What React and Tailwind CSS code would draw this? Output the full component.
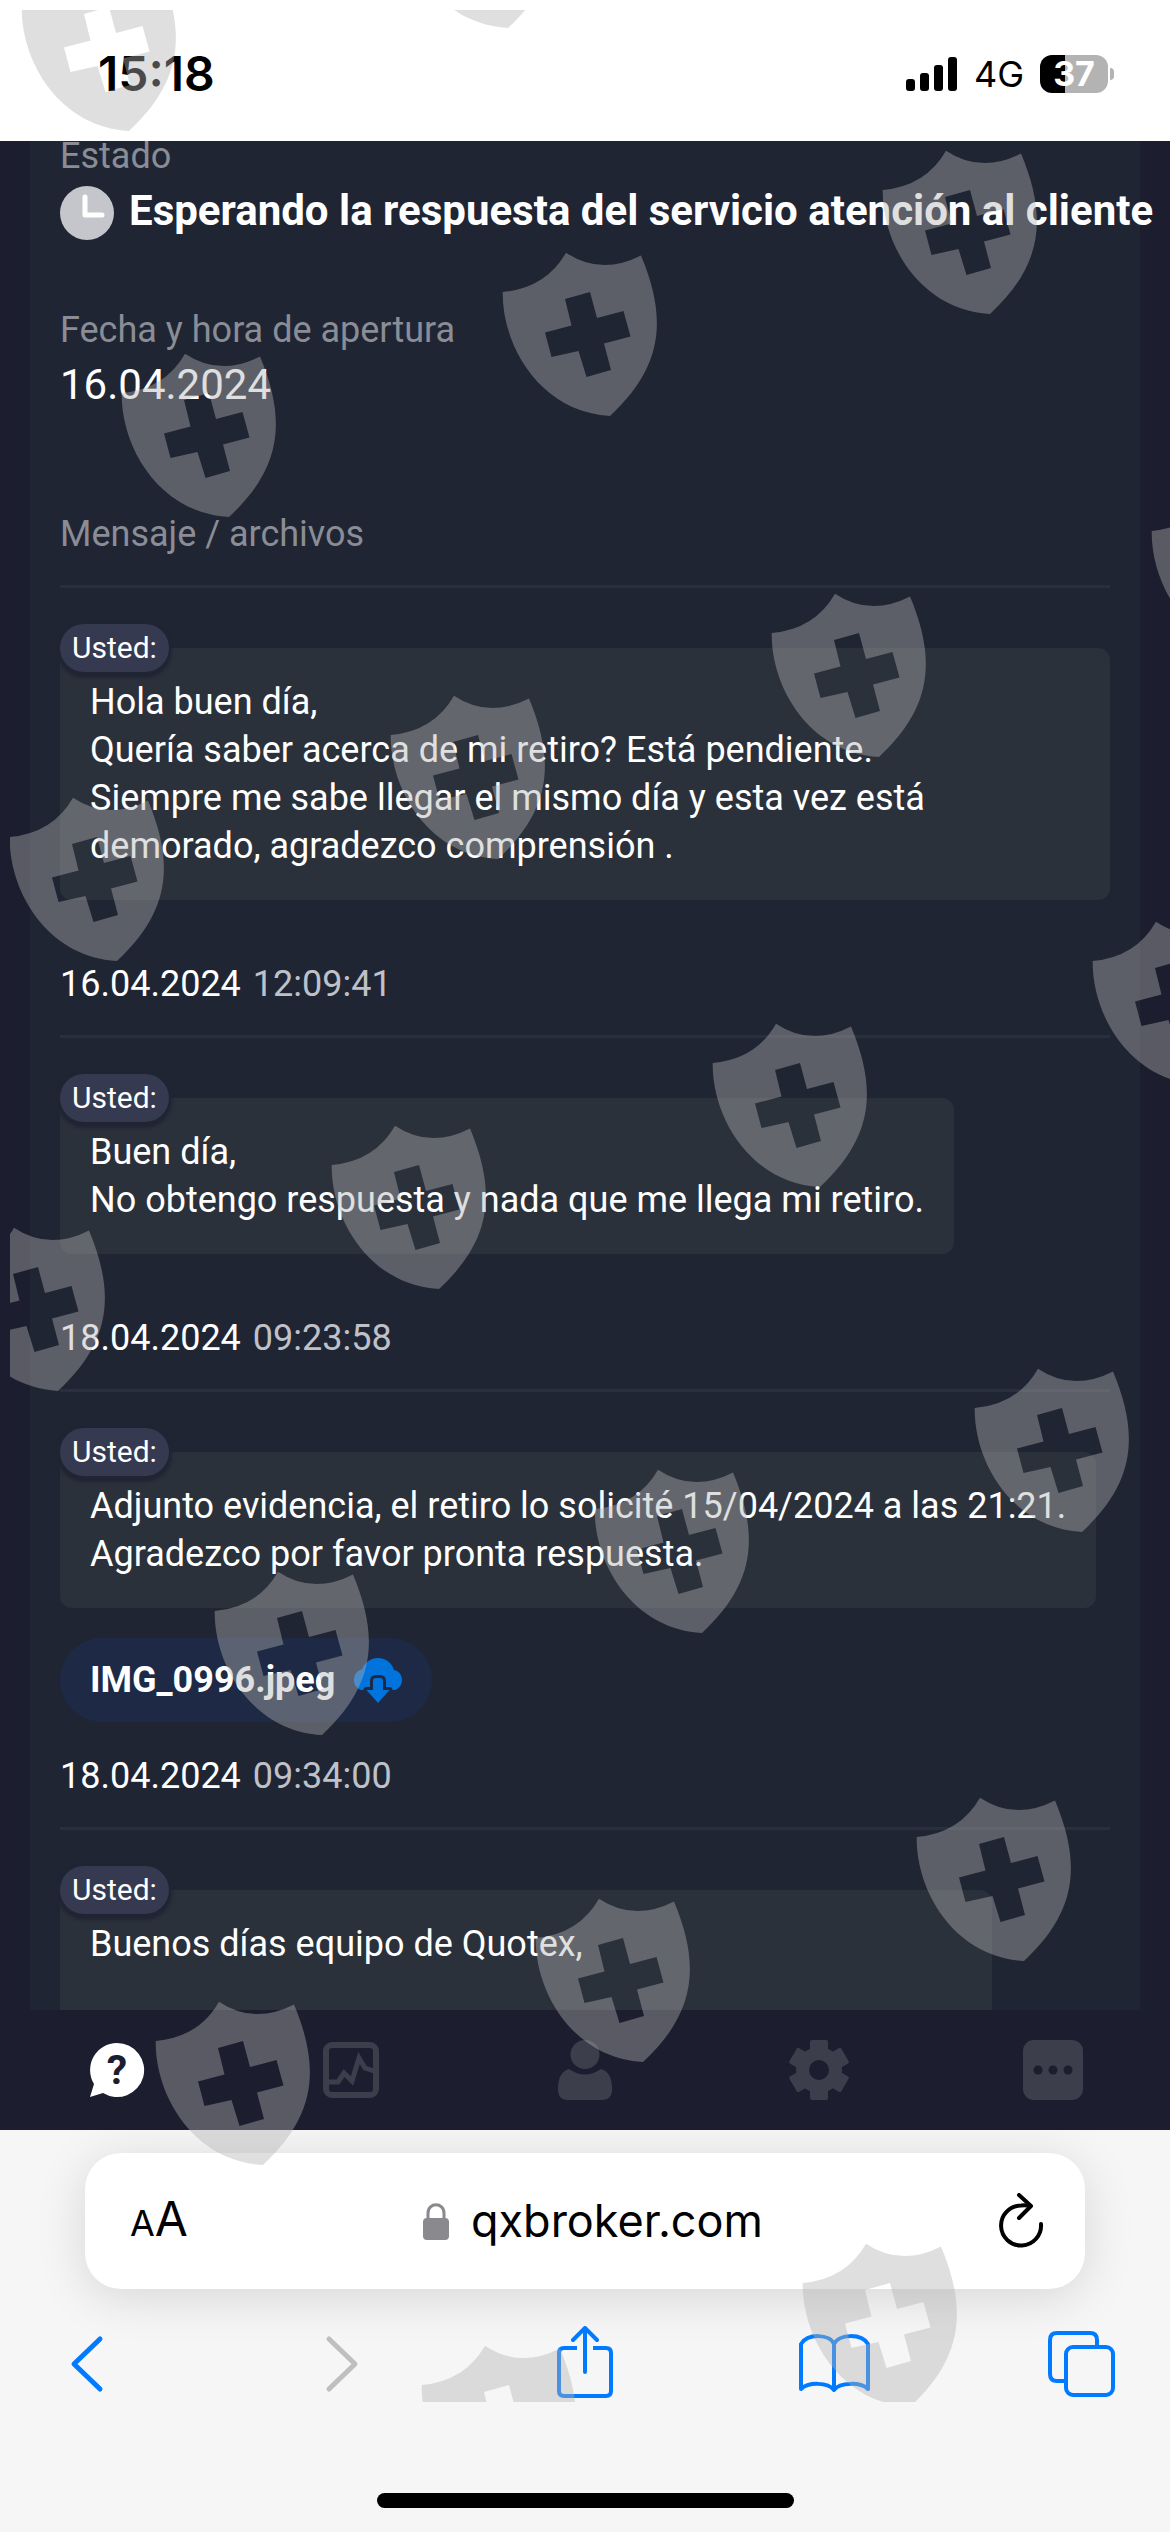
import React from "react";

const messages = [
    {
        id: 1,
        text: "Hola buen día,\nQuería saber acerca de mi retiro? Está pendiente.\nSiempre me sabe llegar el mismo día y esta vez está demorado, agradezco comprensión .",
        date: "16.04.2024",
        time: "12:09:41",
    },
    {
        id: 2,
        text: "Buen día,\nNo obtengo respuesta y nada que me llega mi retiro.",
        date: "18.04.2024",
        time: "09:23:58",
    },
    {
        id: 3,
        text: "Adjunto evidencia, el retiro lo solicité 15/04/2024 a las 21:21.\nAgradezco por favor pronta respuesta.",
        date: "18.04.2024",
        time: "09:34:00",
        file: "IMG_0996.jpeg",
    },
    {
        id: 4,
        text: "Buenos días equipo de Quotex,\n\n",
        wide: true,
    },
];

// top-left corner of every watermark shield
const shields = [
    [-1, -55], [378, -158],
    [860, 128], [480, 230], [99, 331],
    [1129, 469], [749, 571], [368, 673], [-13, 775],
    [1070, 899], [690, 1001], [309, 1103], [-72, 1205],
    [952, 1346], [572, 1447], [192, 1549],
    [894, 1775], [513, 1876], [133, 1979],
    [780, 2221], [399, 2323],
];

const Watermark = () => (
    <div className="absolute left-[10px] right-0 top-[10px] bottom-[130px] overflow-hidden pointer-events-none">
        <svg className="w-full h-full" fill="#b2b2b2" fillOpacity="0.416" aria-hidden="true">
            <g transform="translate(-10 -10)">
                {shields.map(([x, y]) => (
                    <path
                        key={`${x}-${y}`}
                        transform={`translate(${x} ${y})`}
                        fillRule="evenodd"
                        d="M22.7 62Q66 58 86 22.7Q121 46 161 25.5C187 88 184 136 130 186C60 182 22 116 22.7 62ZM85 69L91.5 95.5L65 102.5L71.5 127L98.5 121L106.5 147L131 140L124 113.5L150.5 106.5L143.5 81L117 88L110 62Z"
                    />
                ))}
            </g>
        </svg>
    </div>
);

const StatusBar = () => (
    <header className="shrink-0 h-[141px] bg-white text-black flex items-center justify-between pt-[7px] pl-[98px] pr-[56px] font-[Inter,sans-serif]">
        <span className="text-[48px] leading-[54px] font-semibold">15:18</span>
        <div className="flex items-center gap-[16px]">
            <svg className="w-[52px] h-[34px]" viewBox="0 0 52 34">
                <rect x="0" y="22" width="9" height="12" rx="3" />
                <rect x="14" y="16" width="9" height="18" rx="3" />
                <rect x="28" y="8" width="9" height="26" rx="3" />
                <rect x="42" y="0" width="9" height="34" rx="3" />
            </svg>
            <span className="text-[36px] leading-[42px]">4G</span>
            <div className="flex items-center gap-[2px]">
                <div className="w-[68px] h-[38px] rounded-[12px] bg-[linear-gradient(90deg,#000_37%,#b3b3b3_37%)] flex items-center justify-center text-white text-[34px] leading-[38px] font-bold">
                    37
                </div>
                <div className="w-[4px] h-[12px] rounded-r-full bg-[#b3b3b3]" />
            </div>
        </div>
    </header>
);

const CloudIcon = () => (
    <svg className="w-[48px] h-[45px]" viewBox="0 0 48 45" aria-hidden="true">
        <path
            fill="#0074dc"
            d="M7 32C2 30 0 26 0 22C0 16 4 12 8 11.500C11 4 17 0 24 0C32 0 38 5 40 12C45 13 48 17 48 22C48 26 46 30 41 32H7Z"
        />
        <path
            fill="#0074dc"
            stroke="#1e2a45"
            strokeWidth="6"
            strokeLinejoin="round"
            paintOrder="stroke"
            d="M19 23Q19 20 22 20H26Q29 20 29 23V32H35.500L24 45L12.500 32H19Z"
        />
    </svg>
);

const Message = ({ message }) => (
    <article className="border-t-[3px] border-[#2a2f3e] pt-[36px] pb-[27px]">
        <div className="relative w-fit rounded-full bg-[#363a50] px-[12px] text-[30px] leading-[48px] shadow-[0_3px_3px_3px_#202534]">
            Usted:
        </div>
        <div
            className={`-mt-[24px] w-fit max-w-full rounded-[12px] bg-[#2b313b] p-[30px] text-[36px] leading-[48px] whitespace-pre-line ${
                message.wide ? "min-w-[932px]" : ""
            }`}
        >
            {message.text}
        </div>
        {message.file && (
            <button className="mt-[30px] flex h-[84px] items-center gap-[19px] rounded-full bg-[#1e2a45] px-[30px] text-[36px] leading-[48px] font-bold">
                {message.file}
                <CloudIcon />
            </button>
        )}
        {message.date && (
            <p className={`text-[36px] leading-[48px] ${message.file ? "mt-[30px]" : "mt-[60px]"}`}>
                {message.date} <span className="ml-[3px] text-[#bfc1c8]">{message.time}</span>
            </p>
        )}
    </article>
);

const Ticket = () => (
    <main className="flex-1 min-h-0 overflow-hidden px-[30px]">
        <div className="h-full bg-[#202534] px-[30px]">
            <section>
                <p className="text-[36px] leading-[30px] text-[#8a8d95]">Estado</p>
                <div className="mt-[15px] flex h-[54px] items-start gap-[15px]">
                    <svg className="w-[54px] h-[54px] shrink-0" viewBox="0 0 54 54" aria-hidden="true">
                        <circle cx="27" cy="27" r="27" fill="#c5c6cb" />
                        <path d="M25 11V29H42" fill="none" stroke="#fff" strokeWidth="5" strokeLinecap="round" strokeLinejoin="round" />
                    </svg>
                    <h1 className="text-[42px] leading-[50px] font-bold whitespace-nowrap">
                        Esperando la respuesta del servicio atención al cliente
                    </h1>
                </div>
                <p className="mt-[66px] text-[36px] leading-[48px] text-[#8a8d95]">Fecha y hora de apertura</p>
                <p className="mt-[6px] text-[42px] leading-[50px]">16.04.2024</p>
                <h2 className="mt-[100px] mb-[27px] text-[36px] leading-[48px] text-[#8a8d95]">Mensaje / archivos</h2>
            </section>
            {messages.map((message) => (
                <Message key={message.id} message={message} />
            ))}
        </div>
    </main>
);

const TabBar = () => (
    <nav className="relative shrink-0 h-[120px] grid grid-cols-5 place-items-center bg-[#1c1d2e] text-[#3d3e4c]">
        <button aria-label="Soporte" className="text-white">
            <svg className="w-[60px] h-[60px]" viewBox="0 0 60 60">
                <path fill="currentColor" d="M30 3A27 27 0 1 1 16 53L3 57L7 44A27 27 0 0 1 30 3Z" />
                <text x="30" y="44" textAnchor="middle" fill="#1c1d2e" fontFamily="Roboto, sans-serif" fontWeight="700" fontSize="41">?</text>
            </svg>
        </button>
        <button aria-label="Gráfico">
            <svg className="w-[60px] h-[60px]" viewBox="0 0 60 60" fill="none" stroke="currentColor" strokeWidth="6">
                <rect x="5" y="5" width="50" height="50" rx="6" />
                <path d="M7 42H17L23 33L31 41L38 18L44 28L53 31" strokeWidth="5" />
            </svg>
        </button>
        <button aria-label="Cuenta">
            <svg className="w-[60px] h-[60px]" viewBox="0 0 60 60" fill="currentColor">
                <circle cx="30" cy="14.500" r="14.500" />
                <path d="M3 49Q3 32 14 29Q30 40 46 29Q57 32 57 49Q57 60 47 60H13Q3 60 3 49Z" />
            </svg>
        </button>
        <button aria-label="Ajustes">
            <svg className="w-[60px] h-[60px]" viewBox="0 0 60 60" fill="currentColor">
                <circle cx="30" cy="30" r="23" />
                <rect x="21" y="0" width="18" height="60" rx="2" />
                <rect x="21" y="0" width="18" height="60" rx="2" transform="rotate(60 30 30)" />
                <rect x="21" y="0" width="18" height="60" rx="2" transform="rotate(120 30 30)" />
                <circle cx="30" cy="30" r="10" fill="#1c1d2e" />
            </svg>
        </button>
        <button aria-label="Más">
            <svg className="w-[60px] h-[60px]" viewBox="0 0 60 60" fill="currentColor">
                <rect width="60" height="60" rx="11" />
                <g fill="#1c1d2e">
                    <circle cx="15" cy="30" r="4.500" />
                    <circle cx="30" cy="30" r="4.500" />
                    <circle cx="45" cy="30" r="4.500" />
                </g>
            </svg>
        </button>
    </nav>
);

const BrowserBar = () => (
    <footer className="shrink-0 overflow-hidden bg-[#f6f6f6] pt-[23px] pb-[24px] text-black font-[Inter,sans-serif]">
        <div className="mx-[85px] flex h-[136px] items-center justify-between rounded-[36px] bg-white pl-[45px] pr-[41px] shadow-[0_8px_50px_rgba(0,0,0,0.13)]">
            <button aria-label="Formato de página" className="flex items-baseline">
                <span className="text-[36px] leading-[60px]">A</span>
                <span className="text-[48px] leading-[60px]">A</span>
            </button>
            <a href="https://qxbroker.com" className="flex items-center gap-[22px] text-[45px] leading-[60px]">
                <svg className="w-[26px] h-[37px]" viewBox="0 0 26 37" aria-hidden="true">
                    <rect y="15" width="26" height="22" rx="4" fill="#8a8a8e" />
                    <path d="M5 16V10C5 -1 21 -1 21 10V16" fill="none" stroke="#8a8a8e" strokeWidth="3" />
                </svg>
                qxbroker.com
            </a>
            <button aria-label="Recargar">
                <svg className="w-[46px] h-[56px]" viewBox="0 0 46 56" fill="none" stroke="#000" strokeWidth="4" strokeLinecap="round" strokeLinejoin="round">
                    <path d="M43 31A20 20 0 1 1 23 12.500Q28 12 32 13" />
                    <path d="M21 2L33 13L21 25" />
                </svg>
            </button>
        </div>
        <div className="mt-[37px] flex items-center justify-between px-[50px]">
            <button aria-label="Atrás">
                <svg className="w-[72px] h-[72px]" viewBox="0 0 72 72" fill="none" stroke="#007aff" strokeWidth="5" strokeLinecap="round" strokeLinejoin="round">
                    <path d="M50 13L24 38L50 63" />
                </svg>
            </button>
            <button aria-label="Adelante" disabled>
                <svg className="w-[72px] h-[72px]" viewBox="0 0 72 72" fill="none" stroke="#bfbfbf" strokeWidth="5" strokeLinecap="round" strokeLinejoin="round">
                    <path d="M29 13L55 38L29 63" />
                </svg>
            </button>
            <button aria-label="Compartir">
                <svg className="w-[72px] h-[72px]" viewBox="0 0 72 72" fill="none" stroke="#007aff" strokeWidth="4" strokeLinejoin="round">
                    <path d="M28 22H15Q10 22 10 27V65Q10 70 15 70H57Q62 70 62 65V27Q62 22 57 22H44" />
                    <path d="M36 46V3M24 14L36 2L48 14" strokeLinecap="round" />
                </svg>
            </button>
            <button aria-label="Marcadores">
                <svg className="w-[72px] h-[72px]" viewBox="0 0 72 72" fill="none" stroke="#007aff" strokeWidth="4" strokeLinejoin="round">
                    <path d="M35 18C31 8 9 7 2 18V63C9 56 29 56 35 64C41 56 62 56 69 63V18C62 7 40 8 35 18V64" />
                </svg>
            </button>
            <button aria-label="Pestañas">
                <svg className="w-[72px] h-[72px]" viewBox="0 0 72 72" fill="none" stroke="#007aff" strokeWidth="4">
                    <rect x="18" y="21" width="47" height="48" rx="7" />
                    <path d="M49 21V14Q49 7 42 7H9Q2 7 2 14V48Q2 55 9 55H18" />
                </svg>
            </button>
        </div>
        <div className="mx-auto mt-[95px] h-[15px] w-[417px] rounded-full bg-black" />
    </footer>
);

const App = () => {
    return (
        <div className="relative flex h-screen flex-col overflow-hidden bg-[#1c1d2e] text-white font-[Roboto,sans-serif]">
            <StatusBar />
            <Ticket />
            <TabBar />
            <BrowserBar />
            <Watermark />
        </div>
    );
};

export default App;
